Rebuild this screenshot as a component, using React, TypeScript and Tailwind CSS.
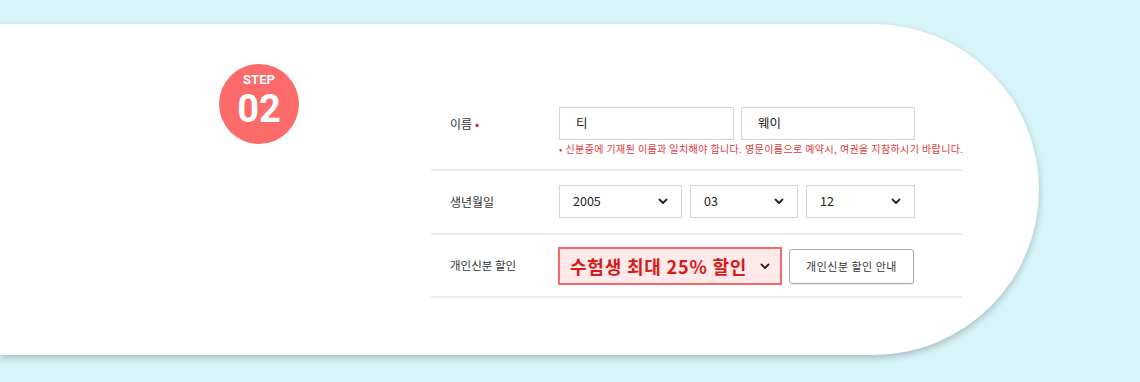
import React from "react";

const kr = { fontFamily: '"Noto Sans CJK KR", "Noto Sans", sans-serif' };

function Chevron({ className = "" }: { className?: string }) {
  return (
    <svg width="10" height="7" viewBox="0 0 10 7" className={className}>
      <path d="M1.5 1.5 L5 5 L8.5 1.5" fill="none" stroke="#222" strokeWidth="1.8" strokeLinecap="round" strokeLinejoin="round" />
    </svg>
  );
}

function Select({ value, w }: { value: string; w: string }) {
  return (
    <div className={`${w} h-[33px] border border-[#d6d6d6] bg-white flex items-center justify-between pl-[13px] pr-[13px]`}>
      <span className="text-[12.5px] text-[#222]">{value}</span>
      <Chevron />
    </div>
  );
}

export default function App() {
  return (
    <div className="w-[1140px] h-[382px] bg-[#d7f4f8] pt-[24px] overflow-hidden" style={kr}>
      <div className="w-[1039px] h-[331px] bg-white rounded-r-full shadow-[0_3px_7px_rgba(0,0,0,0.22)] flex">
        <div className="ml-[219px] mt-[40px] w-[80px] h-[80px] rounded-full bg-[#fd6a6a] flex flex-col items-center text-white shrink-0" style={{ fontFamily: 'Roboto, Inter, "Liberation Sans", sans-serif' }}>
          <span className="mt-[9px] text-[13px] font-bold leading-[13px]">STEP</span>
          <span className="mt-[5px] text-[38px] font-bold leading-[36px]">02</span>
        </div>
        <div className="ml-[132px] mt-[69px] w-[531px] shrink-0">
          {/* Row 1 */}
          <div className="flex border-b-2 border-[#ebebeb] pt-[14px] pb-[13px]">
            <div className="w-[128px] shrink-0 pl-[19px] pt-[8px] text-[12px] text-[#333]">
              이름<span className="text-[#d71a1a] ml-[3px]">•</span>
            </div>
            <div className="flex flex-col w-[356px] shrink-0">
              <div className="flex gap-[7px]">
                <div className="w-[175px] h-[33px] border border-[#d6d6d6] flex items-center pl-[16px] text-[12.5px] text-[#222]">티</div>
                <div className="w-[174px] h-[33px] border border-[#d6d6d6] flex items-center pl-[16px] text-[12.5px] text-[#222]">웨이</div>
              </div>
              <div className="mt-[2px] text-[10px] leading-[14px] text-[#e0383a] whitespace-nowrap tracking-[0.4px]">
                • 신분증에 기재된 이름과 일치해야 합니다. 영문이름으로 예약시, 여권을 지참하시기 바랍니다.
              </div>
            </div>
          </div>
          {/* Row 2 */}
          <div className="flex items-center border-b-2 border-[#ebebeb] pt-[14px] pb-[15px]">
            <div className="w-[128px] shrink-0 pl-[19px] text-[12px] text-[#333]">생년월일</div>
            <div className="flex gap-[8px]">
              <Select value="2005" w="w-[123px]" />
              <Select value="03" w="w-[108px]" />
              <Select value="12" w="w-[109px]" />
            </div>
          </div>
          {/* Row 3 */}
          <div className="flex items-center border-b-2 border-[#ebebeb] pt-[12px] pb-[11px]">
            <div className="w-[127px] shrink-0 pl-[19px] text-[11.5px] text-[#333]">개인신분 할인</div>
            <div className="w-[224px] h-[38px] border-2 border-[#f26a6a] bg-[#ffe9e9] flex items-center justify-between pl-[10px] pr-[10px]">
              <span className="text-[18px] font-bold text-[#d71a1a] tracking-[0.8px]">수험생 최대 25% 할인</span>
              <Chevron />
            </div>
            <div className="ml-[7px] w-[125px] h-[35px] border border-[#a9a9a9] rounded-[3px] flex items-center justify-center text-[11px] tracking-[0.5px] text-[#333] shadow-[0_1px_1px_rgba(0,0,0,0.08)]">
              개인신분 할인 안내
            </div>
          </div>
        </div>
      </div>
    </div>
  );
}
